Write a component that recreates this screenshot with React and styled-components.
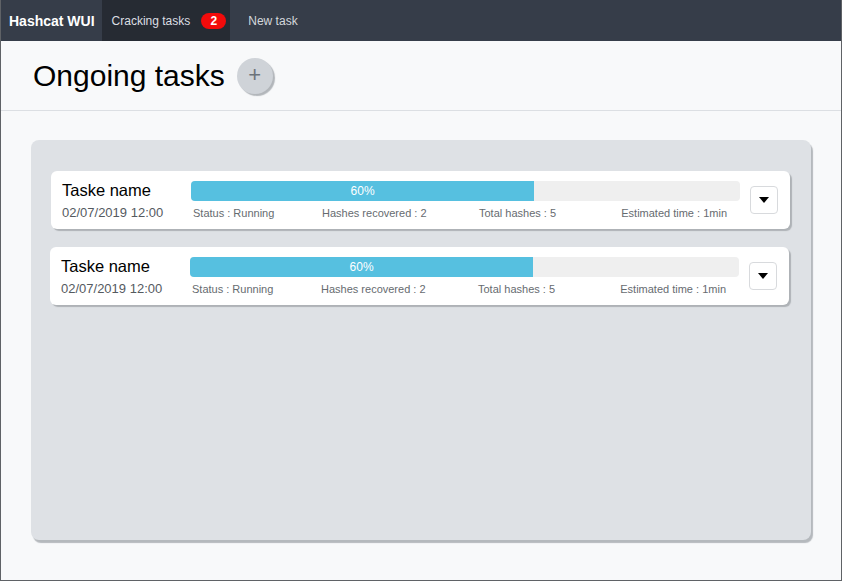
import React from 'react';
import styled, { createGlobalStyle } from 'styled-components';

const tasks = [
  { id: 1, name: 'Taske name', date: '02/07/2019 12:00', progress: 60, fill: 62.5, status: 'Running', recovered: 2, total: 5, eta: '1min' },
  { id: 2, name: 'Taske name', date: '02/07/2019 12:00', progress: 60, fill: 62.5, status: 'Running', recovered: 2, total: 5, eta: '1min' }
];

const GlobalStyle = createGlobalStyle`
  html, body {
    margin: 0;
    padding: 0;
    background: #f8f9fa;
    font-family: "Liberation Sans", Arial, Helvetica, sans-serif;
  }
  * { box-sizing: border-box; }
`;

const Frame = styled.div`
  width: 842px;
  height: 581px;
  border: 1px solid #5f6266;
  border-top: none;
  display: flex;
  flex-direction: column;
  background: #f8f9fa;
`;

const Navbar = styled.nav`
  height: 41px;
  background: #363d49;
  display: flex;
  align-items: stretch;
  flex-shrink: 0;
`;

const Brand = styled.div`
  color: #fff;
  font-weight: bold;
  font-size: 14px;
  display: flex;
  align-items: center;
  padding: 0 7px 0 8px;
`;

const NavTab = styled.div`
  display: flex;
  align-items: center;
  gap: 11px;
  padding: ${p => (p.active ? '0 4px 0 10px' : '0 10px 0 18px')};
  background: ${p => (p.active ? '#262b33' : 'transparent')};
  color: ${p => (p.active ? '#dcdfe3' : '#d4d8dd')};
  font-size: 12px;
`;

const Badge = styled.span`
  background: #f20b0b;
  color: #fff;
  font-weight: bold;
  font-size: 12px;
  height: 16px;
  min-width: 25px;
  border-radius: 8px;
  display: inline-flex;
  align-items: center;
  justify-content: center;
`;

const Header = styled.header`
  height: 70px;
  border-bottom: 1px solid #dcdfe3;
  display: flex;
  align-items: center;
  gap: 12px;
  padding: 0 32px;
  flex-shrink: 0;
`;

const Title = styled.h1`
  margin: 0;
  font-size: 30px;
  font-weight: normal;
  color: #000;
`;

const AddButton = styled.button`
  width: 36px;
  height: 36px;
  border-radius: 50%;
  border: none;
  background: #cfd3d8;
  box-shadow: 2px 2px 1px #b2b6ba;
  color: #6c737b;
  font-size: 22px;
  font-weight: 300;
  padding: 0 0 2px;
  display: flex;
  align-items: center;
  justify-content: center;
  font-family: "Liberation Sans", Arial, sans-serif;
`;

const Main = styled.main`
  flex: 1;
  display: flex;
  padding: 29px 30px 40px 30px;
`;

const Panel = styled.section`
  flex: 1;
  background: #dee1e5;
  border-radius: 8px;
  box-shadow: 2px 3px 1px #b5b9bd;
  padding: 31px 21px 20px 20px;
  display: flex;
  flex-direction: column;
  gap: 18px;
`;

const Card = styled.div`
  height: 58px;
  background: #fff;
  border-radius: 6px;
  box-shadow: 2px 2px 1px #aeb2b6;
  display: grid;
  grid-template-columns: 119px 1fr 28px;
  column-gap: 10px;
  align-items: center;
  padding: 0 12px 0 11px;
  margin-left: ${p => p.shift}px;
  margin-right: ${p => -p.shift}px;
`;

const Info = styled.div`
  display: flex;
  flex-direction: column;
`;

const Name = styled.div`
  font-size: 16.5px;
  line-height: 20px;
  color: #000;
`;

const DateText = styled.div`
  font-size: 13px;
  line-height: 16px;
  margin-top: 5px;
  color: #555a5f;
`;

const Progress = styled.div`
  display: flex;
  flex-direction: column;
`;

const Bar = styled.div`
  height: 20px;
  background: #efefef;
  border-radius: 4px;
  overflow: hidden;
`;

const Fill = styled.div`
  height: 100%;
  background: #56c0e0;
  color: #fff;
  font-size: 12px;
  display: flex;
  align-items: center;
  justify-content: center;
`;

const Stats = styled.div`
  margin-top: 5px;
  display: grid;
  grid-template-columns: 129px 157px 1fr auto;
  padding: 0 13px 0 2px;
  font-size: 11px;
  line-height: 14px;
  color: #666b70;
`;

const Toggle = styled.button`
  width: 28px;
  height: 28px;
  border: 1px solid #d8dadd;
  border-radius: 4px;
  background: #fff;
  padding: 0;
  display: flex;
  align-items: center;
  justify-content: center;
`;

const TaskCard = ({ task, shift }) => (
  <Card shift={shift}>
    <Info>
      <Name>{task.name}</Name>
      <DateText>{task.date}</DateText>
    </Info>
    <Progress>
      <Bar>
        <Fill style={{ width: `${task.fill}%` }}>{task.progress}%</Fill>
      </Bar>
      <Stats>
        <span>Status : {task.status}</span>
        <span>Hashes recovered : {task.recovered}</span>
        <span>Total hashes : {task.total}</span>
        <span>Estimated time : {task.eta}</span>
      </Stats>
    </Progress>
    <Toggle aria-label='expand'>
      <svg width='10' height='6' viewBox='0 0 10 6'>
        <path d='M0 0 H10 L5 6 Z' fill='#000' />
      </svg>
    </Toggle>
  </Card>
);

const App = () => (
  <>
    <GlobalStyle />
    <Frame>
      <Navbar>
        <Brand>Hashcat WUI</Brand>
        <NavTab active>
          Cracking tasks
          <Badge>2</Badge>
        </NavTab>
        <NavTab>New task</NavTab>
      </Navbar>
      <Header>
        <Title>Ongoing tasks</Title>
        <AddButton>+</AddButton>
      </Header>
      <Main>
        <Panel>
          {tasks.map((task, i) => (
            <TaskCard key={task.id} task={task} shift={-i} />
          ))}
        </Panel>
      </Main>
    </Frame>
  </>
);

export default App;
